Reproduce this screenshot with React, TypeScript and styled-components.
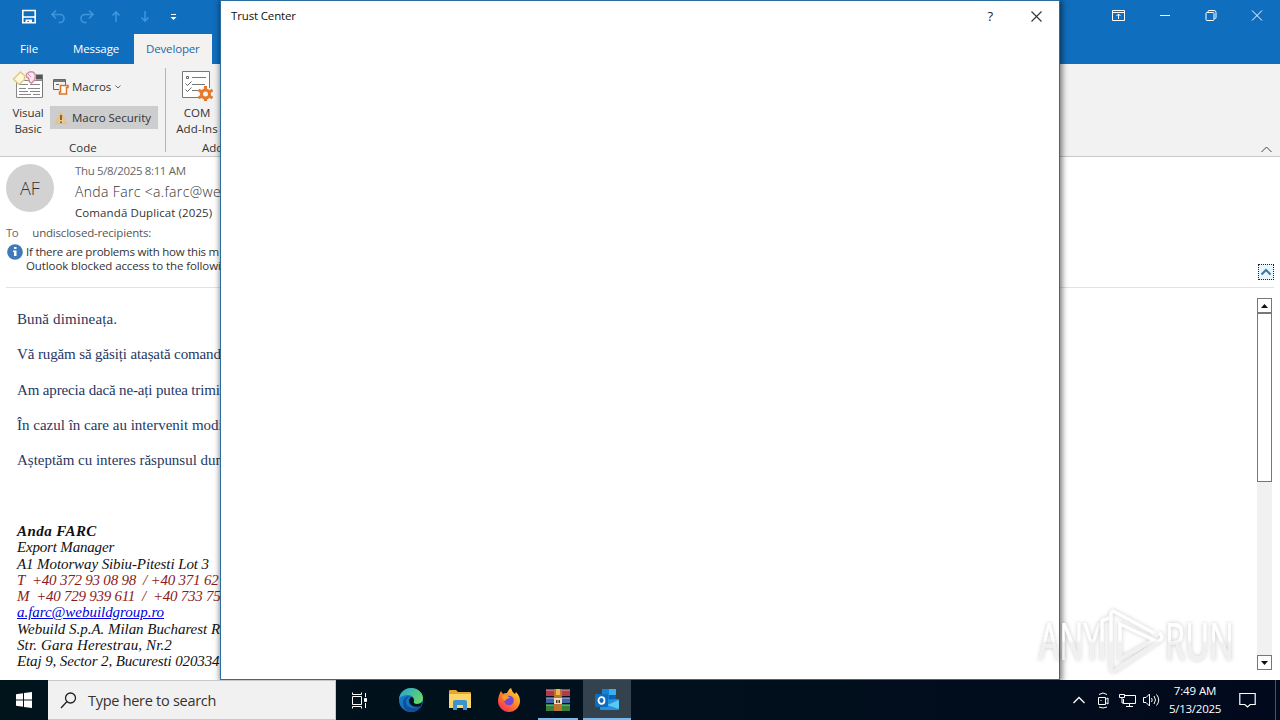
import type { ReactNode } from "react";
import styled, { createGlobalStyle } from "styled-components";

const GlobalStyle = createGlobalStyle`
    *{ box-sizing:border-box; }

    body{
        margin:0;
        overflow:hidden;
        font-family:"Open Sans", "Noto Sans", sans-serif;
    }

    svg{ display:block; flex:none; }
`;

const Desktop = styled.div`
    position:relative;
    display:flex;
    flex-direction:column;
    width:1280px;
    height:720px;
    overflow:hidden;
    background:#fff;
`;

const Text = styled.span<{ $size?: number; $gap?: number; $color?: string; $light?: boolean }>`
    display:block;
    font-size:${({ $size = 11.5 }) => $size}px;
    font-weight:${({ $light }) => ($light ? 300 : 400)};
    letter-spacing:${({ $gap = 0 }) => $gap}px;
    color:${({ $color = "#333" }) => $color};
    line-height:16px;
    white-space:nowrap;
`;

/* ---------- Outlook window ---------- */

const TitleBar = styled.header`
    display:flex;
    justify-content:space-between;
    height:34px;
    padding:0 15px 0 21px;
    background:#106ebe;
`;

const TitleGroup = styled.div<{ $gap: number; $height: number }>`
    display:flex;
    align-items:center;
    gap:${({ $gap }) => $gap}px;
    height:${({ $height }) => $height}px;
`;

const Tabs = styled.nav`
    display:flex;
    height:30px;
    background:#106ebe;
`;

const Tab = styled.div<{ $width: number; $left: number; $active?: boolean }>`
    width:${({ $width }) => $width}px;
    padding:7px 0 0 ${({ $left }) => $left}px;
    background:${({ $active }) => ($active ? "#f3f2f1" : "transparent")};
`;

const Ribbon = styled.section`
    display:flex;
    height:93px;
    background:#f2f2f2;
    border-bottom:1px solid #c8c8c8;
`;

const RibbonGroup = styled.div<{ $width: number }>`
    display:flex;
    flex-direction:column;
    flex:none;
    width:${({ $width }) => $width}px;
    padding-top:5px;
`;

const GroupBody = styled.div`
    display:flex;
    height:71px;
`;

const BigButton = styled.div<{ $width: number; $left?: number }>`
    display:flex;
    flex-direction:column;
    align-items:center;
    flex:none;
    width:${({ $width }) => $width}px;
    padding-left:${({ $left = 0 }) => $left}px;

    svg{ margin-bottom:4px; }
`;

const SmallButtons = styled.div`
    display:flex;
    flex-direction:column;
    gap:8px;
    padding-top:6px;
`;

const SmallButton = styled.div<{ $active?: boolean }>`
    display:flex;
    align-items:center;
    gap:3px;
    width:108px;
    height:23px;
    padding-left:3px;
    background:${({ $active }) => ($active ? "#cdcdcd" : "transparent")};
`;

const GroupLabel = styled.div<{ $left: number }>`
    padding-left:${({ $left }) => $left}px;
`;

const Divider = styled.div`
    flex:none;
    width:1px;
    height:84px;
    margin-top:4px;
    background:#b4b4b4;
`;

const Collapse = styled.div`
    display:flex;
    flex:1;
    align-items:flex-end;
    justify-content:flex-end;
    padding:0 7px 3px 0;
`;

const MailHeader = styled.section`
    display:flex;
    flex-direction:column;
    height:131px;
    margin:0 6px;
    border-bottom:1px solid #dfe3e8;
`;

const Sender = styled.div`
    display:flex;
    gap:21px;
    height:68px;
    padding-top:7px;
`;

const Avatar = styled.div`
    display:flex;
    align-items:center;
    justify-content:center;
    width:48px;
    height:48px;
    border-radius:50%;
    background:#d2d2d2;
`;

const SenderLines = styled.div`
    display:grid;
    grid-template-rows:21px 21px 16px;
    margin-top:-1px;
`;

const Recipients = styled.div`
    display:flex;
    gap:14px;
    height:18px;
`;

const InfoBar = styled.div`
    display:flex;
    gap:3px;
    padding-left:1px;
    height:44px;

    ${Text}{ line-height:14px; }
`;

const Notice = styled.div`
    flex:1;
    padding-top:2px;
`;

const ExpandButton = styled.div`
    display:flex;
    align-items:center;
    justify-content:center;
    width:16px;
    height:16px;
    margin-top:21px;
    border:1px dotted #222;
    background:#eaf6fd;
`;

const Reading = styled.main`
    display:flex;
    justify-content:space-between;
    flex:1;
    min-height:0;
    padding:10px 8px 10px 17px;
`;

const Letter = styled.article`
    font-family:"Liberation Serif", serif;
    white-space:nowrap;
`;

const Paragraph = styled.p<{ $gap: number }>`
    margin:0 0 15.25px;
    font-size:15px;
    line-height:20px;
    letter-spacing:${({ $gap }) => $gap}px;
    color:#1f3864;

    &:first-child{ margin-top:11px; }
`;

const Signature = styled.div`
    margin-top:53px;
    font-style:italic;
`;

const SignLine = styled.div<{ $gap: number; $color?: string; $bold?: boolean; $link?: boolean }>`
    height:16.25px;
    font-size:15px;
    line-height:16.25px;
    font-weight:${({ $bold }) => ($bold ? 700 : 400)};
    letter-spacing:${({ $gap }) => $gap}px;
    color:${({ $color = "#111" }) => $color};
    text-decoration:${({ $link }) => ($link ? "underline" : "none")};
    white-space:pre;
`;

const ScrollBar = styled.div`
    display:flex;
    flex-direction:column;
    width:15px;
    height:372px;
    background:#f1f1f1;
`;

const ScrollButton = styled.div`
    display:flex;
    align-items:center;
    justify-content:center;
    height:15px;
    border:1px solid #777;
    background:#fff;

    &:last-child{ margin-top:auto; }
`;

const Thumb = styled.div`
    height:169px;
    border:1px solid #777;
    background:#fff;
`;

/* ---------- Dialog and watermark ---------- */

const Dialog = styled.section`
    position:absolute;
    top:0;
    left:220px;
    width:840px;
    height:680px;
    border:1px solid #2b6d9f;
    background:#fff;
    box-shadow:1px 1px 6px 1px rgba(0, 0, 0, .55);
`;

const DialogTitle = styled.div`
    display:flex;
    align-items:center;
    height:30px;
    padding:0 17px 0 10px;
`;

const DialogButtons = styled.div`
    display:flex;
    align-items:center;
    gap:38px;
    margin-left:auto;
`;

const Watermark = styled.div`
    position:absolute;
    top:602px;
    left:1030px;
`;

/* ---------- Taskbar ---------- */

const Taskbar = styled.footer`
    position:relative;
    display:flex;
    flex:none;
    height:40px;
    background:linear-gradient(90deg, #01141c, #01101c 50%, #010a1c);
`;

const TaskSlot = styled.div<{ $width: number; $active?: boolean; $running?: boolean }>`
    display:flex;
    align-items:center;
    justify-content:center;
    flex:none;
    width:${({ $width }) => $width}px;
    background:${({ $active }) => ($active ? "#34424d" : "transparent")};
    box-shadow:${({ $running }) => ($running ? "inset 0 -2px #76b9ed" : "none")};
`;

const SearchBox = styled.div`
    display:flex;
    align-items:center;
    gap:11px;
    width:288px;
    padding-left:12px;
    border:1px solid #c9c9c9;
    border-left:0;
    background:#f1f1f1;

    ${Text}{ line-height:18px; padding-top:1px; }
`;

const Tray = styled.div`
    display:flex;
    align-items:center;
    margin-left:auto;
`;

const Clock = styled.div`
    display:flex;
    flex-direction:column;
    align-items:center;
    width:64px;

    ${Text}{ line-height:18px; }
`;

const PeekLine = styled.div`
    width:1px;
    height:40px;
    margin:0 4px 0 7px;
    background:#4b5661;
`;

type IconProps = { w: number; h: number; color?: string; width?: number; children: ReactNode };

function Icon({ w, h, color = "#fff", width = 1, children }: IconProps) {
    return (
        <svg width={w} height={h} viewBox={`0 0 ${w} ${h}`} fill="none" stroke={color} strokeWidth={width}>
            {children}
        </svg>
    );
}

function QuickAccess() {
    const faded = "#3f95dc";

    return (
        <TitleGroup $gap={14} $height={33}>
            <Icon w={15} h={15} width={1.6}>
                <path d="M1.800 1.500h12.400v12.200H1.800z" />
                <path d="M2 8h12" />
                <path d="M4.500 10.500h6.500v3.500H8v-2H6.500v2h-2z" fill="#fff" stroke="none" />
            </Icon>
            <Icon w={15} h={15} color={faded} width={1.6}>
                <path d="M6 1.500 2 5.500l4 4M2.500 5.500H10a4 4 0 0 1 0 8H8.500" />
            </Icon>
            <Icon w={15} h={15} color={faded} width={1.6}>
                <path d="m10 1.500 4 4-4 4M13.500 5.500H6a4 4 0 0 0 0 8h1.500" />
            </Icon>
            <Icon w={15} h={15} color={faded} width={1.6}>
                <path d="M8 13V3M4.500 6.500 8 3l3.500 3.500" />
            </Icon>
            <Icon w={15} h={15} color={faded} width={1.6}>
                <path d="M8 2v10M4.500 8.500 8 12l3.500-3.500" />
            </Icon>
            <Icon w={15} h={15}>
                <path d="M5 5.500h5" />
                <path d="M4.500 8h6l-3 3z" fill="#fff" stroke="none" />
            </Icon>
        </TitleGroup>
    );
}

function WindowButtons() {
    return (
        <TitleGroup $gap={32} $height={30}>
            <Icon w={15} h={11}>
                <path d="M1.500.5h12v10h-12zM1.500 2.500h12M7.500 9V4M5.500 6l2-2 2 2" />
            </Icon>
            <Icon w={15} h={11}>
                <path d="M2 5.500h10" />
            </Icon>
            <Icon w={13} h={11}>
                <rect x="1" y="2.500" width="8" height="8" rx="1" />
                <path d="M3 2V1.500q0-1 1-1h5q2 0 2 2v5q0 1-1 1h-.5" />
            </Icon>
            <Icon w={15} h={11}>
                <path d="m2 .5 10 10M12 .5l-10 10" />
            </Icon>
        </TitleGroup>
    );
}

function VisualBasicIcon() {
    return (
        <svg width="32" height="32" viewBox="0 0 32 32" fill="none">
            <path d="M4.500 11.500h26v17h-26z" fill="#fff" stroke="#888" />
            <path d="M24 5.500h7v5h-7z" fill="#555" />
            <path d="M30.500 6v22" stroke="#777" />
            <path d="M7 15.500h9M18 15.500h10M7 19.500h7M16 19.500h12M7 22.500h9M18 22.500h10M7 25.500h12M21 25.500h7" stroke="#888" />
            <path d="m1.500 10 7-7 4 3.500v4l-5.500 5z" fill="#fff8e0" stroke="#e3c97c" strokeWidth="1.500" />
            <path d="m14.500 5 3-2q5-1 6 4l-1 4-3 3-2-1-1-4-2-1z" fill="#fbe9ef" stroke="#d98aa6" strokeWidth="1.500" />
            <path d="m16 5 3 3" stroke="#d98aa6" />
        </svg>
    );
}

function AddInsIcon() {
    return (
        <svg width="32" height="32" viewBox="0 0 32 32" fill="none">
            <path d="M1.500 2.500h27v26h-27z" fill="#fff" stroke="#777" />
            <path d="M5.500 7.500h2v2h-2z" stroke="#666" />
            <path d="M11 8.500h14M11 15.500h13M11 21.500h6" stroke="#777" />
            <path d="m4.500 14.500 2 2 4-4M4.500 20.500l2 2 4-4" stroke="#666" />
            <circle cx="24.500" cy="25" r="7.500" fill="#f2f2f2" />
            <circle cx="24.500" cy="25" r="4" stroke="#e57a2c" strokeWidth="3" />
            <path d="M24.500 17v3M24.500 30v2M17.500 21l3 1.800M28.500 27.200l3 1.800M17.500 29l3-1.800M28.500 22.800l3-1.800" stroke="#e57a2c" strokeWidth="3" />
        </svg>
    );
}

function RibbonBar() {
    return (
        <Ribbon>
            <RibbonGroup $width={165}>
                <GroupBody>
                    <BigButton $width={50} $left={6}>
                        <VisualBasicIcon />
                        <Text $gap={-0.1}>Visual</Text>
                        <Text $gap={-0.1}>Basic</Text>
                    </BigButton>
                    <SmallButtons>
                        <SmallButton>
                            <Icon w={16} h={16} color="#666">
                                <path d="M6 10.500H.5v-10h12V6M.5 2.500h12M3 5.500h3" />
                                <path d="M1 1h11v2H1z" fill="#777" stroke="none" />
                                <path d="M7.500 6.500h7.500v2h-1.500v6.500h-7v-2h1z" fill="#fff" stroke="#dd7428" strokeWidth="1.500" />
                            </Icon>
                            <Text>Macros</Text>
                            <Icon w={8} h={8} color="#666">
                                <path d="m1.500 2.500 2.500 2.500L6.500 2.500" />
                            </Icon>
                        </SmallButton>
                        <SmallButton $active>
                            <Icon w={16} h={14} color="#e9bd70">
                                <path d="m8 1.500 5.500 11h-11z" fill="#f0c987" />
                                <path d="M8 4v5M8 10.500v1.500" stroke="#5a4428" strokeWidth="1.500" />
                            </Icon>
                            <Text $gap={-0.05}>Macro Security</Text>
                        </SmallButton>
                    </SmallButtons>
                </GroupBody>
                <GroupLabel $left={69}>
                    <Text>Code</Text>
                </GroupLabel>
            </RibbonGroup>
            <Divider />
            <RibbonGroup $width={90}>
                <GroupBody>
                    <BigButton $width={62}>
                        <AddInsIcon />
                        <Text>COM</Text>
                        <Text $gap={0.1}>Add-Ins</Text>
                    </BigButton>
                </GroupBody>
                <GroupLabel $left={36}>
                    <Text>Add-ins</Text>
                </GroupLabel>
            </RibbonGroup>
            <Collapse>
                <Icon w={13} h={7} color="#444">
                    <path d="m1.500 6 5-5 5 5" />
                </Icon>
            </Collapse>
        </Ribbon>
    );
}

const paragraphs = [
    { text: "Bună dimineața.", gap: 0.12 },
    { text: "Vă rugăm să găsiți atașată comanda", gap: -0.12 },
    { text: "Am aprecia dacă ne-ați putea trimite", gap: -0.15 },
    { text: "În cazul în care au intervenit modificări", gap: 0 },
    { text: "Așteptăm cu interes răspunsul dumneavoastră", gap: -0.02 },
];

const signature = [
    { text: "Anda FARC", gap: 0.45, bold: true },
    { text: "Export Manager", gap: -0.18 },
    { text: "A1 Motorway Sibiu-Pitesti Lot 3", gap: -0.1 },
    { text: "T  +40 372 93 08 98  / +40 371 62", gap: -0.22, color: "#8b1a1a" },
    { text: "M  +40 729 939 611  /  +40 733 75", gap: -0.26, color: "#8b1a1a" },
    { text: "a.farc@webuildgroup.ro", gap: -0.04, color: "#0000e0", link: true },
    { text: "Webuild S.p.A. Milan Bucharest R", gap: -0.04 },
    { text: "Str. Gara Herestrau, Nr.2", gap: 0.12 },
    { text: "Etaj 9, Sector 2, Bucuresti 020334", gap: -0.12 },
];

function Message() {
    return (
        <>
            <MailHeader>
                <Sender>
                    <Avatar>
                        <Text $size={18} $color="#333" $light>AF</Text>
                    </Avatar>
                    <SenderLines>
                        <Text $gap={-0.35} $color="#666">Thu 5/8/2025 8:11 AM</Text>
                        <Text $size={14} $gap={0.35} $color="#333" $light>Anda Farc &lt;a.farc@webuildgroup.ro&gt;</Text>
                        <Text $gap={0.1}>Comandă Duplicat (2025)</Text>
                    </SenderLines>
                </Sender>
                <Recipients>
                    <Text $gap={-0.5} $color="#666">To</Text>
                    <Text $gap={-0.19} $color="#555">undisclosed-recipients:</Text>
                </Recipients>
                <InfoBar>
                    <svg width="16" height="17" viewBox="0 0 16 17">
                        <circle cx="8" cy="9" r="7.800" fill="#3f7ab8" />
                        <path d="M7 4h2.500v2H7zM6 7.500h3.500V13H7V9H6z" fill="#fff" />
                    </svg>
                    <Notice>
                        <Text $gap={-0.23}>If there are problems with how this m</Text>
                        <Text $gap={-0.1}>Outlook blocked access to the followi</Text>
                    </Notice>
                    <ExpandButton>
                        <Icon w={12} h={8} color="#3a78a8" width={2}>
                            <path d="m1.500 6.500 4.500-4.500 4.500 4.500" />
                        </Icon>
                    </ExpandButton>
                </InfoBar>
            </MailHeader>
            <Reading>
                <Letter>
                    {paragraphs.map(({ text, gap }) => (
                        <Paragraph key={text} $gap={gap}>{text}</Paragraph>
                    ))}
                    <Signature>
                        {signature.map(({ text, gap, color, bold, link }) => (
                            <SignLine key={text} $gap={gap} $color={color} $bold={bold} $link={link}>{text}</SignLine>
                        ))}
                    </Signature>
                </Letter>
                <ScrollBar>
                    <ScrollButton>
                        <Icon w={7} h={4}><path d="M0 4h7L3.500 0z" fill="#111" stroke="none" /></Icon>
                    </ScrollButton>
                    <Thumb />
                    <ScrollButton>
                        <Icon w={7} h={4}><path d="M0 0h7L3.500 4z" fill="#111" stroke="none" /></Icon>
                    </ScrollButton>
                </ScrollBar>
            </Reading>
        </>
    );
}

function AnyRun() {
    return (
        <Watermark>
            <svg width="250" height="90" viewBox="0 0 250 90" fill="none">
                <defs>
                    <linearGradient id="mark" x1="0" y1="0" x2="0" y2="76" gradientUnits="userSpaceOnUse">
                        <stop offset=".5" stopColor="#fff" />
                        <stop offset=".54" stopColor="#f0f0f0" />
                    </linearGradient>
                    <filter id="glow" x="-10%" y="-20%" width="120%" height="140%">
                        <feDropShadow dx="0" dy="0" stdDeviation="2" floodColor="#000" floodOpacity=".24" />
                    </filter>
                </defs>
                <g filter="url(#glow)" fill="url(#mark)" fontFamily="Open Sans" fontSize="51" fontWeight="400">
                    <text x="9" y="58" textLength="62" lengthAdjust="spacingAndGlyphs">ANY</text>
                    <text x="135" y="58" textLength="69" lengthAdjust="spacingAndGlyphs">RUN</text>
                </g>
                <g filter="url(#glow)" stroke="url(#mark)" strokeWidth="3">
                    <path d="M72 58V20q0-2 2-2l5-2M81 64V12q0-4 4-2l39 21" />
                    <path d="M90 22v35l34-19z" />
                    <path d="M129 31q6 4 0 8L86 68q-5 3-5-4" />
                </g>
            </svg>
        </Watermark>
    );
}

function EdgeIcon() {
    return (
        <svg width="24" height="24" viewBox="0 0 24 24">
            <defs>
                <linearGradient id="edge" x1="0" y1="0" x2="1" y2=".5">
                    <stop offset="0" stopColor="#229fdc" />
                    <stop offset="1" stopColor="#64d66a" />
                </linearGradient>
            </defs>
            <circle cx="12" cy="12" r="12" fill="#1577c4" />
            <path d="M0 11C1 4 6 0 12 0c7 0 12 5 12 10 0 4-3 6-6 6-3 0-4-1-3-3 1-3-2-6-6-6-4 0-7 1-9 4z" fill="url(#edge)" />
            <path d="M7 13c0 6 5 9 15 5-2 4-6 6-10 6-5 0-8-4-8-9 0-4 3-7 7-7-2 1-4 3-4 5z" fill="#124f99" />
            <path d="M15 13c-1 2 0 3 3 3 2 0 4-1 5-2 0 2-1 3-1 4-5 2-12 0-12-5 0-2 1-3 2-4 2 0 3 2 3 4z" fill="#03141e" />
        </svg>
    );
}

function FolderIcon() {
    return (
        <svg width="22" height="20" viewBox="0 0 22 20">
            <path d="M0 1q0-1 1-1h6l2 2h12q1 0 1 1v15H0z" fill="#e6a532" />
            <path d="M0 4h22v14H0z" fill="#fbd566" />
            <path d="M4 12q0-2 2-2h10q2 0 2 2v8h-4v-5H8v5H4z" fill="#3d93cf" />
        </svg>
    );
}

function FirefoxIcon() {
    return (
        <svg width="24" height="24" viewBox="0 0 24 24">
            <defs>
                <linearGradient id="fox" x1="1" y1="0" x2=".2" y2="1">
                    <stop offset="0" stopColor="#ffe443" />
                    <stop offset=".5" stopColor="#ff8a24" />
                    <stop offset="1" stopColor="#f52a55" />
                </linearGradient>
            </defs>
            <path d="M3 5l1-2 2 3q1-1 4-1 1-3 4-5 1 4 4 6l1-2c3 3 4 6 4 9 0 6-5 11-11 11S1 19 1 13c0-3 1-6 2-8z" fill="url(#fox)" />
            <circle cx="12" cy="12.500" r="4.800" fill="#7546d2" />
            <path d="M5 8c4-2 6 0 8 2-2 0-4 1-5 3-2-1-3-3-3-5z" fill="#ff9a2b" />
        </svg>
    );
}

function WinrarIcon() {
    return (
        <svg width="24" height="22" viewBox="0 0 24 22">
            <path d="M0 0h24v7H0z" fill="#b23a49" />
            <path d="M0 8h24v6H0z" fill="#3f64a8" />
            <path d="M0 15h24v7H0z" fill="#34803f" />
            <path d="M0 1.500h24M0 9.500h24M0 16.500h24" stroke="#d7cbd0" strokeWidth=".4" />
            <path d="M8 0h8v22H8z" fill="#b97436" />
            <path d="M10 0h4v6h-4z" fill="#edbb4a" />
            <path d="M8 9h8v6H8z" fill="#eee0c4" />
            <path d="M10 11h1.500v3H10zM12.500 11H14v3h-1.500z" fill="#49351c" />
        </svg>
    );
}

function OutlookIcon() {
    return (
        <svg width="26" height="22" viewBox="0 0 26 22">
            <path d="M8 0h14v14H8z" fill="#1482d8" />
            <path d="M15 0h7v6h-7z" fill="#35b1ee" />
            <path d="M15 6h7v7h-7z" fill="#0b62b5" />
            <path d="m6 11 18-1 1 1v9q0 1-1 1H7q-1 0-1-1z" fill="#2393df" />
            <path d="M25 11v9L13 16z" fill="#58c8f4" />
            <rect x="1" y="5" width="13" height="13" rx="1" fill="#0f6cbd" />
            <ellipse cx="7.500" cy="11.500" rx="3" ry="3.300" fill="none" stroke="#fff" strokeWidth="1.800" />
        </svg>
    );
}

function TaskbarStrip() {
    return (
        <Taskbar>
            <TaskSlot $width={48}>
                <svg width="16" height="16" viewBox="0 0 16 16">
                    <path d="M0 2.200 7 1.200v6.300H0zM8 1l8-1v7.500H8zM0 8.500h7v6.300l-7-1zM8 8.500h8V16l-8-1z" fill="#fff" />
                </svg>
            </TaskSlot>
            <SearchBox>
                <Icon w={17} h={17} color="#222" width={1.3}>
                    <circle cx="10.500" cy="6" r="5" />
                    <path d="m7 9.500-6 6.500" />
                </Icon>
                <Text $size={14.5} $gap={-0.28}>Type here to search</Text>
            </SearchBox>
            <TaskSlot $width={47}>
                <Icon w={17} h={17}>
                    <path d="M1.500 4.500h9v8h-9zM1.500.5V2.500h9V.5M1.500 16.500v-2h9v2M14.500 1v4M14.500 11v5" />
                    <path d="M13.500 6.500h2v3h-2z" fill="#fff" />
                </Icon>
            </TaskSlot>
            <TaskSlot $width={55}><EdgeIcon /></TaskSlot>
            <TaskSlot $width={44}><FolderIcon /></TaskSlot>
            <TaskSlot $width={53}><FirefoxIcon /></TaskSlot>
            <TaskSlot $width={3} />
            <TaskSlot $width={40} $running><WinrarIcon /></TaskSlot>
            <TaskSlot $width={5} />
            <TaskSlot $width={48} $active $running><OutlookIcon /></TaskSlot>
            <Tray>
                <TaskSlot $width={24}>
                    <Icon w={14} h={8} width={1.3}><path d="m1.500 7 5.500-5.500L12.500 7" /></Icon>
                </TaskSlot>
                <TaskSlot $width={24}>
                    <Icon w={14} h={17}>
                        <path d="M2.500 5.500h7v7h-7zM9.500 7.500l2.500-1.500v6l-2.500-1.500M3 2.500q4-3 8 0M3 15q4 2 8 0" />
                        <path d="M4.500 8.500h1" />
                    </Icon>
                </TaskSlot>
                <TaskSlot $width={24}>
                    <Icon w={17} h={15}>
                        <path d="M6 2.500h10.500v8H4.500V6M10.500 10.500v3M7 13.500h7" />
                        <path d="M.5 1.500h5v3h-5zM3 5v5h1.500" />
                    </Icon>
                </TaskSlot>
                <TaskSlot $width={24}>
                    <Icon w={18} h={14}>
                        <path d="M1.500 4.500h2.500l3.500-3.500v12L4 9.500H1.500zM9.500 5q1.500 2 0 4M12 3q3 4 0 8M14.500 1.500q4.500 5.500 0 11" />
                    </Icon>
                </TaskSlot>
                <Clock>
                    <Text $gap={-0.1} $color="#fff">7:49 AM</Text>
                    <Text $gap={-0.25} $color="#fff">5/13/2025</Text>
                </Clock>
                <TaskSlot $width={41}>
                    <Icon w={17} h={17} width={1.2}>
                        <path d="M.8 1.500h15.400v11h-5L8.500 15l-2.700-2.500h-5z" />
                    </Icon>
                </TaskSlot>
                <PeekLine />
            </Tray>
        </Taskbar>
    );
}

export default function App() {
    return (
        <Desktop>
            <GlobalStyle />
            <TitleBar>
                <QuickAccess />
                <WindowButtons />
            </TitleBar>
            <Tabs>
                <Tab $width={58} $left={20}><Text $color="#fff">File</Text></Tab>
                <Tab $width={76} $left={15}><Text $gap={-0.1} $color="#fff">Message</Text></Tab>
                <Tab $width={78} $left={12} $active><Text $gap={-0.15} $color="#2368a8">Developer</Text></Tab>
            </Tabs>
            <RibbonBar />
            <Message />
            <Dialog>
                <DialogTitle>
                    <Text $gap={-0.15} $color="#111">Trust Center</Text>
                    <DialogButtons>
                        <Text $size={13} $color="#222">?</Text>
                        <Icon w={11} h={11} color="#333" width={1.1}>
                            <path d="m.5.5 10 10M10.500.5l-10 10" />
                        </Icon>
                    </DialogButtons>
                </DialogTitle>
            </Dialog>
            <TaskbarStrip />
            <AnyRun />
        </Desktop>
    );
}
